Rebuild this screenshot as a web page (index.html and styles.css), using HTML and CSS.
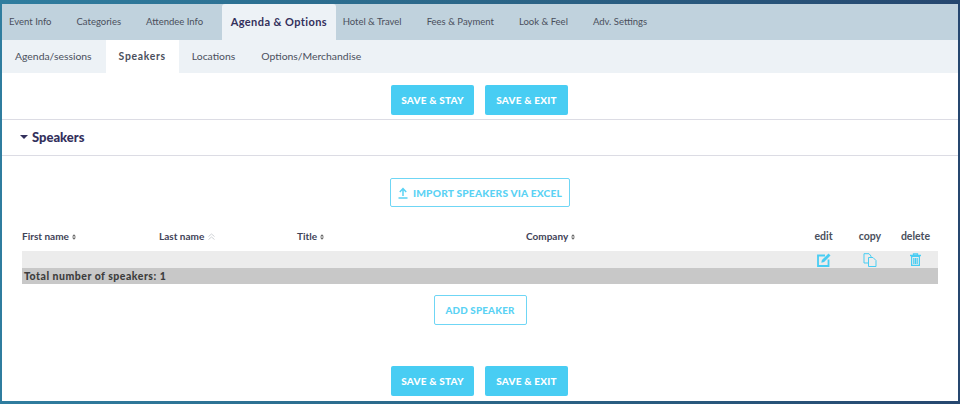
FILE: index.html
```html
<!DOCTYPE html>
<html lang="en">
<head>
<meta charset="utf-8">
<title>Speakers</title>
<link rel="stylesheet" href="styles.css">
</head>
<body>
<div class="frame">
  <nav class="tabs">
    <a class="tab">Event Info</a>
    <a class="tab">Categories</a>
    <a class="tab">Attendee Info</a>
    <a class="tab active">Agenda &amp; Options</a>
    <a class="tab">Hotel &amp; Travel</a>
    <a class="tab">Fees &amp; Payment</a>
    <a class="tab">Look &amp; Feel</a>
    <a class="tab">Adv. Settings</a>
  </nav>
  <nav class="subtabs">
    <a class="subtab">Agenda/sessions</a>
    <a class="subtab active">Speakers</a>
    <a class="subtab">Locations</a>
    <a class="subtab">Options/Merchandise</a>
  </nav>
  <div class="actions top">
    <button class="btn solid">SAVE &amp; STAY</button>
    <button class="btn solid">SAVE &amp; EXIT</button>
  </div>
  <h2 class="section"><span class="caret"></span>Speakers</h2>
  <div class="import-row">
    <button class="btn outline import">
      <svg class="upload" width="10" height="12" viewBox="0 0 10 12"><path d="M5 9V2M1.800 5L5 1.600 8.200 5M0.500 11h9" fill="none" stroke="currentColor" stroke-width="1.500"/></svg>
      <span>IMPORT SPEAKERS VIA EXCEL</span>
    </button>
  </div>
  <div class="table">
    <div class="row head">
      <div class="c first">First name <svg class="sort" width="4" height="6" viewBox="0 0 5 7"><path d="M2.500 0L5 2.800H0zM2.500 7L0 4.200h5z"/></svg></div>
      <div class="c last">Last name <svg class="sort" width="7" height="7" viewBox="0 0 7 7"><path d="M.5 3.500l3-2.500 3 2.500M.5 6.500l3-2.500 3 2.500" fill="none" stroke="#c4c8cc" stroke-width=".8"/></svg></div>
      <div class="c title">Title <svg class="sort" width="4" height="6" viewBox="0 0 5 7"><path d="M2.500 0L5 2.800H0zM2.500 7L0 4.200h5z"/></svg></div>
      <div class="c company">Company <svg class="sort" width="4" height="6" viewBox="0 0 5 7"><path d="M2.500 0L5 2.800H0zM2.500 7L0 4.200h5z"/></svg></div>
      <div class="c edit">edit</div>
      <div class="c copy">copy</div>
      <div class="c del">delete</div>
    </div>
    <div class="row body">
      <div class="c first"></div><div class="c last"></div><div class="c title"></div><div class="c company"></div>
      <div class="c edit">
        <svg width="14" height="14" viewBox="0 0 14 14"><path d="M8 2.500H1v10.500h10.500V6.500" fill="none" stroke="currentColor" stroke-width="1.800"/><path d="M4.300 9.700l.6-2.700L11.500.6l2 2-6.400 6.500z" fill="currentColor"/></svg>
      </div>
      <div class="c copy">
        <svg width="14" height="14" viewBox="0 0 14 14"><path d="M5.500 10H1V.7h5l2 2.300V5M5.500 4.500h4.500l3 3v6H5.500z" fill="none" stroke="currentColor" stroke-width="1"/></svg>
      </div>
      <div class="c del">
        <svg width="11" height="13" viewBox="0 0 11 13"><path d="M0 2.500h11M3.500 2.500V.8h4v1.700" fill="none" stroke="currentColor" stroke-width="1.300"/><path d="M1.600 3.500h7.800v8.800H1.600zM3.800 5v6M5.500 5v6M7.200 5v6" fill="none" stroke="currentColor" stroke-width="1.200"/></svg>
      </div>
    </div>
    <div class="total">Total number of speakers: 1</div>
  </div>
  <div class="add-row">
    <button class="btn outline add">ADD SPEAKER</button>
  </div>
  <div class="actions bottom">
    <button class="btn solid">SAVE &amp; STAY</button>
    <button class="btn solid">SAVE &amp; EXIT</button>
  </div>
</div>
</body>
</html>
```
FILE: styles.css
```css
* { box-sizing: border-box; }
html, body { height: 100%; }
body {
  margin: 0;
  height: 404px;
  overflow: hidden;
  background: linear-gradient(90deg, #2f7d9f 0%, #2b6688 50%, #26476f 100%);
  padding: 4px 2px 3px 2px;
  font-family: Lato, "Open Sans", sans-serif;
  color: #4a4f5c;
}
.frame { background: #fff; height: 397px; display: flex; flex-direction: column; }
.tabs { display: flex; height: 36px; background: #c0d2dd; }
.tab { font-size: 9.500px; line-height: 36px; padding: 0 12.500px; white-space: nowrap; }
.tab:first-child { padding-left: 7px; }
.tab.active {
  background: #edf2f6; font-weight: 700; color: #33305c; border-radius: 3px 3px 0 0;
  padding: 0 8.500px; font-size: 11px; letter-spacing: .42px; margin: 0 -5.500px 0 6.500px;
}
.subtabs { display: flex; height: 33px; background: #edf2f6; }
.subtab { font-size: 10.400px; line-height: 33px; padding: 0 13px; white-space: nowrap; }
.subtab:first-child { padding-right: 14px; }
.subtab.active { background: #fff; font-weight: 700; letter-spacing: .7px; }
.actions { display: flex; justify-content: center; gap: 11px; padding-right: 1px; }
.actions.top { padding-top: 12px; height: 47px; border-bottom: 1px solid #dcdce4; }
.actions.bottom { margin-top: 41px; }
.btn { font-family: inherit; font-weight: 900; font-size: 10px; border-radius: 2px; letter-spacing: .2px; white-space: nowrap; }
.btn.solid { width: 83px; height: 30px; border: 0; background: #48cdf3; color: #fff; }
.section {
  margin: 0; height: 36px; padding: 0 0 1px 18px;
  font-size: 13px; font-weight: 900; color: #33305c; border-bottom: 1px solid #dcdce4;
  display: flex; align-items: center;
}
.caret { width: 0; height: 0; border: 4px solid transparent; border-top: 4px solid #33305c; border-bottom: 0; margin-right: 4px; }
.import-row { display: flex; justify-content: center; padding-top: 22px; }
.btn.outline { background: #fff; border: 1px solid #6fd6f5; color: #5ad2f4; padding: 0; }
.import { width: 180px; height: 29px; display: flex; align-items: center; justify-content: center; gap: 5px; font-size: 10.200px; }
.table { margin: 14px 20px 0 20px; }
.row { display: flex; }
.row.head { height: 30px; align-items: center; font-size: 10px; font-weight: 700; color: #3f4358; }
.c { flex: none; }
.first { width: 137px; }
.last { width: 138px; }
.title { width: 229px; }
.company { width: 274px; }
.edit { width: 47px; text-align: center; }
.copy { width: 46px; text-align: center; }
.del { width: 45px; text-align: center; }
.head .edit, .head .copy, .head .del { font-size: 10.500px; font-weight: 700; color: #4a4f5c; }
.sort { fill: #666; margin-left: 1px; }
.row.body { height: 17px; background: #ececec; align-items: center; color: #48cdf3; }
.row.body svg { display: block; margin: 0 auto; }
.total {
  height: 16px; line-height: 16px; background: #c8c8c8; font-size: 10.500px; font-weight: 900; color: #3d3d3d; padding-left: 2px; letter-spacing: .5px;
}
.add-row { display: flex; justify-content: center; padding-top: 11px; }
.add { width: 93px; height: 30px; font-size: 9.800px; }
```
